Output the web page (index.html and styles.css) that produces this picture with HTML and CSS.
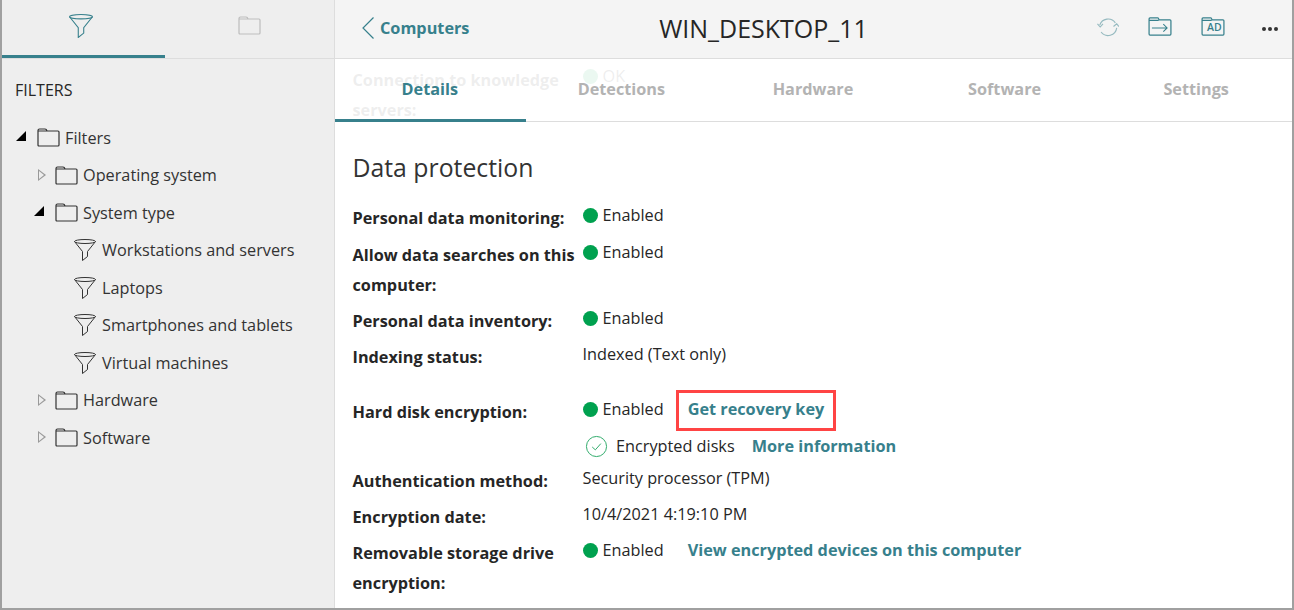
FILE: index.html
```html
<!DOCTYPE html>
<html lang="en">
<head>
    <meta charset="UTF-8">
    <title>WIN_DESKTOP_11</title>
    <link rel="stylesheet" href="styles.css">
</head>
<body>
    <svg class="defs" width="0" height="0">
        <symbol id="funnel" viewBox="1 1 22 22">
            <ellipse cx="12" cy="3.5" rx="10.5" ry="2" fill="none" stroke="currentColor"/>
            <path d="M1.5 3.5 L9.5 13.5 V22.5 L14.5 18.5 V13.5 L22.5 3.5" fill="none" stroke="currentColor"/>
        </symbol>
        <symbol id="folder" viewBox="0 0 23 19">
            <path d="M1 17 V2.5 Q1 1 2.5 1 H8 Q9.5 1 10 3 H21 Q22 3 22 4 V17 Q22 18 21 18 H2 Q1 18 1 17 Z M1 3 H10" fill="none" stroke="currentColor" stroke-width="1.2"/>
        </symbol>
    </svg>
    <div class="app">
        <aside class="side">
            <div class="side-tabs">
                <div class="side-tab active">
                    <svg class="ic-top" width="24" height="24"><use href="#funnel"/></svg>
                </div>
                <div class="side-tab muted">
                    <svg class="ic-top" width="23" height="19"><use href="#folder"/></svg>
                </div>
            </div>
            <h2 class="side-title">FILTERS</h2>
            <ul class="tree">
                <li class="lvl0"><span class="arrow open"></span><svg class="folder" width="23" height="19"><use href="#folder"/></svg>Filters</li>
                <li class="lvl1"><span class="arrow"></span><svg class="folder" width="23" height="19"><use href="#folder"/></svg>Operating system</li>
                <li class="lvl1"><span class="arrow open"></span><svg class="folder" width="23" height="19"><use href="#folder"/></svg>System type</li>
                <li class="lvl2"><svg class="funnel" width="22" height="22"><use href="#funnel"/></svg>Workstations and servers</li>
                <li class="lvl2"><svg class="funnel" width="22" height="22"><use href="#funnel"/></svg>Laptops</li>
                <li class="lvl2"><svg class="funnel" width="22" height="22"><use href="#funnel"/></svg>Smartphones and tablets</li>
                <li class="lvl2"><svg class="funnel" width="22" height="22"><use href="#funnel"/></svg>Virtual machines</li>
                <li class="lvl1"><span class="arrow"></span><svg class="folder" width="23" height="19"><use href="#folder"/></svg>Hardware</li>
                <li class="lvl1"><span class="arrow"></span><svg class="folder" width="23" height="19"><use href="#folder"/></svg>Software</li>
            </ul>
        </aside>
        <main class="main">
            <header class="head">
                <a class="back">
                    <svg width="14" height="24" viewBox="0 0 14 24"><path d="M12.5 1.5 L2 12 L12.5 22.5" fill="none" stroke="currentColor" stroke-width="1.2"/></svg>
                    Computers
                </a>
                <h1 class="head-title">WIN_DESKTOP_11</h1>
                <div class="head-tools">
                    <svg class="tool faded" width="22" height="22" viewBox="0 0 24 24">
                        <path d="M3 10 A9.5 9.5 0 0 1 20 7.5 M21.5 13 A9.5 9.5 0 0 1 4.5 17.5" fill="none" stroke="currentColor" stroke-width="1.2"/>
                        <path d="M0.5 8.5 L3.5 12 L6.5 8.5 M18 11.5 L21.5 8.5 L24 11.5" fill="none" stroke="currentColor" stroke-width="1.2"/>
                    </svg>
                    <svg class="tool" width="24" height="19" viewBox="0 0 25 20">
                        <path d="M1 18 V2 Q1 1 2 1 H10 Q11 1 11.500 3 H23 Q24 3 24 4 V18 Q24 19 23 19 H2 Q1 19 1 18 Z M1 3.500 H11" fill="none" stroke="currentColor" stroke-width="1.300"/>
                        <path d="M4 11.500 H20 M16 7.500 L20 11.500 L16 15.500" fill="none" stroke="currentColor" stroke-width="1.100"/>
                    </svg>
                    <span class="ad-tool">
                        <svg width="24" height="19" viewBox="0 0 25 20">
                            <path d="M1 18 V2 Q1 1 2 1 H10 Q11 1 11.500 3 H23 Q24 3 24 4 V18 Q24 19 23 19 H2 Q1 19 1 18 Z M1 3.500 H11" fill="none" stroke="currentColor" stroke-width="1.300"/>
                        </svg>
                        <span class="ad-text">AD</span>
                    </span>
                    <span class="more"><i></i><i></i><i></i></span>
                </div>
            </header>
            <div class="body">
                <nav class="tabs">
                    <span class="tab active">Details</span>
                    <span class="tab">Detections</span>
                    <span class="tab">Hardware</span>
                    <span class="tab">Software</span>
                    <span class="tab">Settings</span>
                </nav>
                <div class="ghost">
                    <div class="row">
                        <div class="label">Connection to knowledge servers:</div>
                        <div class="val"><span class="dot"></span>OK</div>
                    </div>
                </div>
                <section class="section">
                    <h3 class="section-title">Data protection</h3>
                    <div class="row">
                        <div class="label">Personal data monitoring:</div>
                        <div class="val"><span class="dot"></span>Enabled</div>
                    </div>
                    <div class="row">
                        <div class="label">Allow data searches on this computer:</div>
                        <div class="val"><span class="dot"></span>Enabled</div>
                    </div>
                    <div class="row">
                        <div class="label">Personal data inventory:</div>
                        <div class="val"><span class="dot"></span>Enabled</div>
                    </div>
                    <div class="row gap-after">
                        <div class="label">Indexing status:</div>
                        <div class="val">Indexed (Text only)</div>
                    </div>
                    <div class="row disk">
                        <div class="label">Hard disk encryption:</div>
                        <div class="val">
                            <div class="line"><span class="dot"></span>Enabled<a class="link marked">Get recovery key</a></div>
                            <div class="line sub">
                                <svg class="check" width="23" height="23" viewBox="0 0 24 24">
                                    <circle cx="12" cy="12" r="10.500" fill="none" stroke="currentColor" stroke-width="1"/>
                                    <path d="M7.500 12.500 L10.800 15.500 L16.500 9" fill="none" stroke="currentColor" stroke-width="1"/>
                                </svg>
                                Encrypted disks<a class="link tight">More information</a>
                            </div>
                        </div>
                    </div>
                    <div class="row">
                        <div class="label">Authentication method:</div>
                        <div class="val">Security processor (TPM)</div>
                    </div>
                    <div class="row">
                        <div class="label">Encryption date:</div>
                        <div class="val">10/4/2021 4:19:10 PM</div>
                    </div>
                    <div class="row last">
                        <div class="label">Removable storage drive encryption:</div>
                        <div class="val"><span class="dot"></span>Enabled<a class="link">View encrypted devices on this computer</a></div>
                    </div>
                </section>
            </div>
        </main>
    </div>
</body>
</html>
```
FILE: styles.css
```css
@charset "utf-8";
* {
    margin: 0;
    padding: 0;
    box-sizing: border-box;
    font-family: "Open Sans", sans-serif;
}
html, body {
    height: 100%;
    overflow: hidden;
}
body {
    background-color: #fff;
    color: #262626;
    font-size: 16.250px;
}
.defs {
    position: absolute;
}
.app {
    display: flex;
    height: 610px;
    border-left: 2px solid #a0a0a0;
    border-right: 2px solid #a0a0a0;
    border-bottom: 2px solid #a0a0a0;
}

/* left panel */
.side {
    flex: 0 0 333px;
    background-color: #eee;
    border-right: 1px solid #ddd;
}
.side-tabs {
    display: flex;
    height: 59px;
    border-bottom: 1px solid #ddd;
}
.side-tab {
    flex: 1;
    display: flex;
    justify-content: center;
    align-items: center;
    height: 58px;
    padding-bottom: 4px;
    color: #37808c;
    border-bottom: 3px solid transparent;
}
.side-tab.active {
    flex: 0 0 163px;
    padding-right: 5px;
    border-bottom-color: #37808c;
}
.side-tab.muted {
    color: #bdbdbd;
}
.side-title {
    margin: 21px 0 0 13px;
    font-size: 16px;
    font-weight: 400;
    line-height: 20px;
}
.tree {
    list-style: none;
    margin-top: 19px;
}
.tree li {
    display: flex;
    align-items: center;
    height: 37.500px;
    color: #333;
}
.lvl0 {
    padding-left: 14px;
}
.lvl1 {
    padding-left: 32px;
}
.lvl2 {
    padding-left: 72px;
}
.arrow {
    flex: 0 0 21px;
    height: 13px;
    position: relative;
}
.arrow::before {
    content: "";
    position: absolute;
    left: 4px;
    top: 0;
    border-left: 8px solid #999;
    border-top: 6.500px solid transparent;
    border-bottom: 6.500px solid transparent;
}
.arrow::after {
    content: "";
    position: absolute;
    left: 5px;
    top: 2px;
    border-left: 5px solid #eee;
    border-top: 4.500px solid transparent;
    border-bottom: 4.500px solid transparent;
}
.arrow.open::before {
    left: 0;
    top: 0;
    border: 0;
    border-bottom: 10px solid #000;
    border-left: 10px solid transparent;
}
.arrow.open::after {
    display: none;
}
.folder {
    margin-right: 5px;
    color: #333;
}
.funnel {
    margin-right: 6px;
    color: #333;
}

/* right panel */
.main {
    flex: 1;
    min-width: 0;
    display: flex;
    flex-direction: column;
}
.head {
    display: flex;
    align-items: center;
    position: relative;
    flex: 0 0 59px;
    padding-bottom: 2px;
    background-color: #f4f4f4;
    border-bottom: 1px solid #ddd;
}
.back {
    display: flex;
    align-items: center;
    gap: 5px;
    margin-left: 26px;
    font-weight: 700;
    color: #37808c;
}
.back svg {
    flex: none;
}
.head-title {
    position: absolute;
    left: 0;
    right: 100px;
    text-align: center;
    font-size: 25px;
    font-weight: 400;
    color: #262626;
}
.head-tools {
    display: flex;
    align-items: center;
    margin-left: auto;
    margin-bottom: 3px;
    color: #37808c;
}
.tool {
    margin-right: 29px;
}
.tool.faded {
    opacity: .5;
}
.ad-tool {
    position: relative;
    display: flex;
    width: 24px;
    height: 19px;
    margin-right: 37px;
}
.ad-text {
    position: absolute;
    left: 6px;
    top: 4px;
    font-size: 10.500px;
    line-height: 13px;
    font-weight: 600;
}
.more {
    display: flex;
    gap: 2px;
    margin-right: 14px;
    margin-top: 4px;
}
.more i {
    width: 4px;
    height: 4px;
    border-radius: 50%;
    background-color: #333;
}
.body {
    position: relative;
    flex: 1;
    overflow: hidden;
}
.tabs {
    position: absolute;
    left: -1px;
    right: 0;
    top: 0;
    display: flex;
    height: 63px;
    background-color: rgba(255, 255, 255, .92);
    border-bottom: 1px solid #ddd;
}
.tab {
    flex: 1;
    height: 63px;
    padding-top: 18px;
    text-align: center;
    line-height: 24px;
    font-weight: 700;
    color: #b3b3b3;
}
.tab.active {
    color: #37808c;
    border-bottom: 3px solid #37808c;
}
.ghost {
    padding: 6px 17.500px 0;
}
.ghost .val {
    margin-top: -1px;
}
.section {
    padding: 0 17.500px;
}
.section-title {
    margin: 26px 0 19px;
    font-size: 24.800px;
    line-height: 33px;
    font-weight: 400;
    color: #333;
}
.row {
    display: grid;
    grid-template-columns: 230px 1fr;
    margin-bottom: 6.500px;
}
.row.gap-after {
    margin-top: -0.600px;
    margin-bottom: 25.100px;
}
.row.disk {
    margin-bottom: 7.500px;
}
.row.last {
    margin-top: -0.400px;
}
.label {
    font-weight: 700;
    line-height: 30px;
}
.val {
    line-height: 24px;
}
.dot {
    display: inline-block;
    width: 15px;
    height: 15px;
    margin-right: 5px;
    vertical-align: -2px;
    border-radius: 50%;
    background-color: #00a14f;
}
.line.sub {
    display: flex;
    align-items: center;
    margin-top: 13px;
}
.check {
    flex: none;
    margin-right: 8.500px;
    margin-left: 2px;
    color: #2aa866;
}
.link {
    margin-left: 24px;
    font-weight: 700;
    color: #37808c;
}
.link.tight {
    margin-left: 17px;
}
.link.marked {
    position: relative;
}
.link.marked::after {
    content: "";
    position: absolute;
    left: -12px;
    right: -12px;
    top: -8px;
    bottom: -11px;
    border: 3px solid #ff4444;
}
```
